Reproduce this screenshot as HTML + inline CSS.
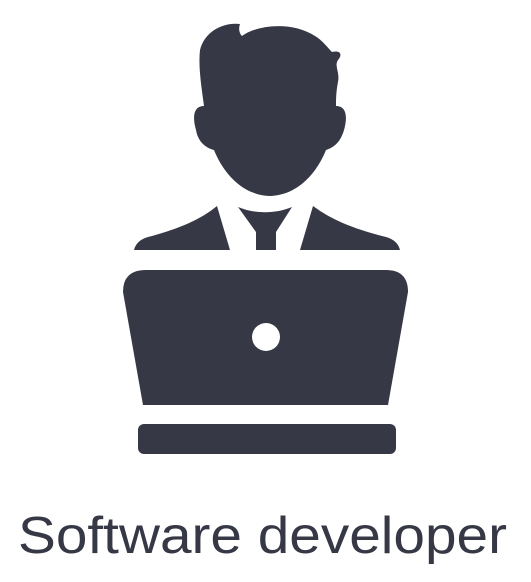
<!DOCTYPE html>
<html><head><style>
html,body{margin:0;padding:0;background:#fff;}
svg{display:block;}
</style></head><body>
<svg width="531" height="582" viewBox="0 0 531 582" xmlns="http://www.w3.org/2000/svg">
<g fill="#363846">
<!-- head -->
<path d="M200 50 C205 30 225 22 240 24 C238 30 240 34 242 36 C255 26 290 20 315 36 C322 40 328 48 332 52 C340 50 343 54 338 60 C334 66 340 72 338 82 C336 92 336 100 336 106 C346 106 348 116 344 130 C340 144 332 148 326 150 C318 170 300 195 270 196 C240 195 222 170 214 150 C206 148 198 142 196 130 C192 116 194 106 204 106 C202 90 198 68 200 50 Z"/>
<!-- left shoulder -->
<path d="M217 206 L230 250 L134 250 C136 242 142 238 152 236 C180 228 200 220 217 206 Z"/>
<!-- right shoulder -->
<path d="M313 206 L300 250 L400 250 C398 242 392 238 382 236 C352 228 332 220 313 206 Z"/>
<!-- tie -->
<path d="M238 207 C255 214 275 214 292 207 L276 232 L276 250 L256 250 L256 232 Z"/>
<!-- laptop -->
<path d="M146 270 L386 270 Q408 270 408 292 L388 405 L143 405 L123 292 Q123 270 146 270 Z"/>
<rect x="138" y="424" width="258" height="30" rx="6"/>
</g>
<circle cx="266" cy="337" r="14" fill="#fff"/>
<text x="18" y="553" font-family="Liberation Sans, sans-serif" font-size="52" fill="#363846" textLength="489" lengthAdjust="spacingAndGlyphs">Software developer</text>
</svg>
</body></html>
